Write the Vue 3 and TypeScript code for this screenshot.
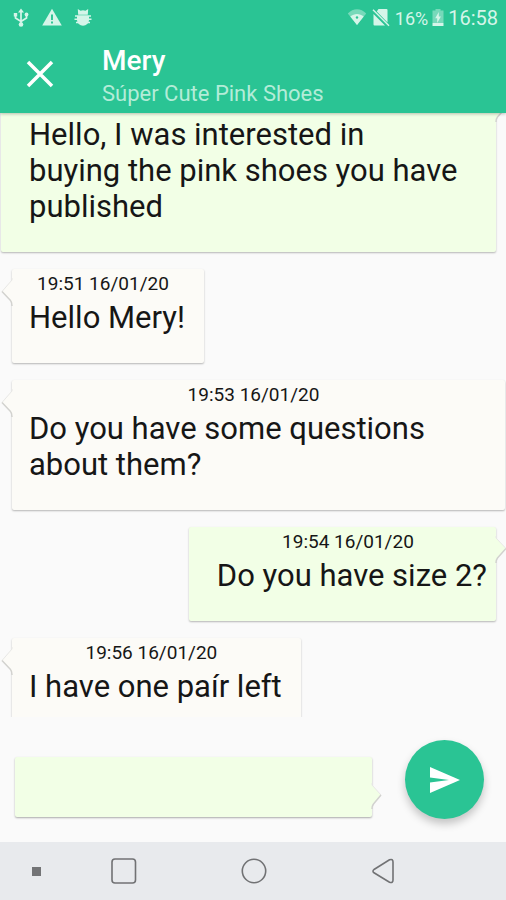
<script setup lang="ts">
import { onMounted, ref } from 'vue'

interface Message {
  id: number
  time: string
  text: string
  mine: boolean
}

const contact = 'Mery'
const item = 'Súper Cute Pink Shoes'
const draft = ref('')
const list = ref<HTMLElement | null>(null)

const messages = ref<Message[]>([
  { id: 1, time: '', text: 'Hello, I was interested in\nbuying the pink shoes you have published', mine: true },
  { id: 2, time: '19:51 16/01/20', text: 'Hello Mery!', mine: false },
  { id: 3, time: '19:53 16/01/20', text: 'Do you have some questions about them?', mine: false },
  { id: 4, time: '19:54 16/01/20', text: 'Do you have size 2?', mine: true },
  { id: 5, time: '19:56 16/01/20', text: 'I have one paír left', mine: false },
])

function send() {
  const text = draft.value.trim()
  if (!text) return
  messages.value.push({ id: messages.value.length + 1, time: '', text, mine: true })
  draft.value = ''
}

onMounted(() => {
  if (list.value) list.value.scrollTop = 35
})
</script>

<template>
  <div class="screen">
    <header class="top">
      <div class="status">
        <div class="status-group left">
          <svg class="icon" viewBox="0 0 20 20" aria-hidden="true">
            <path d="M10 2v14M4.500 6v4l5.500 3.500 5.500-3.500V6" fill="none" stroke="currentColor" stroke-width="1.700" />
            <path d="M10 0.500l3 4H7zM2.800 5h3.400v3.400H2.800z" fill="currentColor" />
            <circle cx="15.500" cy="6.500" r="1.900" fill="currentColor" />
            <circle cx="10" cy="16.500" r="2.300" fill="currentColor" />
          </svg>
          <svg class="icon" viewBox="0 0 20 20" aria-hidden="true">
            <path d="M10 0.800L19.800 17.500H0.200z" fill="currentColor" />
            <path d="M10 6.500v5.500M10 13.500v2" stroke="#2ac494" stroke-width="1.900" />
          </svg>
          <svg class="icon" viewBox="0 0 20 20" aria-hidden="true">
            <path d="M4.800 1l2.700 1.800a6 6 0 0 1 5 0L15.200 1l-.4 5.700H5.200z" fill="currentColor" />
            <path d="M4 8h12v4a6 5.800 0 0 1-12 0z" fill="currentColor" />
            <path d="M2 8h16M1.500 11.200h17M3 14.500h14" stroke="currentColor" stroke-width="1.500" />
          </svg>
        </div>
        <div class="status-group right">
          <svg class="icon" viewBox="0 0 20 20" aria-hidden="true">
            <path d="M0.800 5.500C6-.2 14-.2 19.200 5.500L10 17z" fill="currentColor" opacity=".45" />
            <path d="M3.300 8.600c3.900-3.400 9.500-3.400 13.400 0L10 17z" fill="currentColor" />
            <circle cx="10" cy="9.500" r="1.200" fill="#2ac494" />
          </svg>
          <svg class="icon" viewBox="0 0 20 20" aria-hidden="true">
            <path d="M7.500 1H15.500a1 1 0 0 1 1 1v12.500L5.800 3.500zM2.500 6L14 17.500H3.500a1 1 0 0 1-1-1z" fill="currentColor" />
            <path d="M2 1.800l16 16" stroke="currentColor" stroke-width="1.500" />
          </svg>
          <span class="percent">16%</span>
          <svg class="icon battery" viewBox="0 0 12 20" aria-hidden="true">
            <path d="M3.500 1h5v1.500H11.500V15H.5V2.500h3z" fill="currentColor" opacity=".45" />
            <path d="M.5 15h11v3H.5z" fill="currentColor" />
            <path d="M6.800 4L3.200 10.200h2V15l3.700-6.500h-2.100z" fill="currentColor" />
          </svg>
          <span class="clock">16:58</span>
        </div>
      </div>
      <div class="bar">
        <button class="close" type="button" aria-label="Close">
          <svg viewBox="0 0 28 28" aria-hidden="true">
            <path d="M2 2l24 24M26 2L2 26" stroke="currentColor" stroke-width="3.500" />
          </svg>
        </button>
        <div class="titles">
          <h1>{{ contact }}</h1>
          <p>{{ item }}</p>
        </div>
      </div>
    </header>

    <main ref="list" class="messages">
      <div v-for="m in messages" :key="m.id" class="row" :class="m.mine ? 'sent' : 'received'">
        <article class="bubble">
          <svg v-if="m.mine" class="tail" viewBox="0 0 12 28" aria-hidden="true">
            <path class="tail-fill" d="M0 0H1V2L11 12.500 1 24V27H0z" />
            <path class="tail-top" d="M1 0V2L11 12.500" />
            <path class="tail-edge" d="M11 12.500L2.500 22Q1 24 1 27" />
          </svg>
          <svg v-else class="tail" viewBox="0 0 12 28" aria-hidden="true">
            <path class="tail-fill" d="M12 0H11V2L1 13.500 11 25V28H12z" />
            <path class="tail-top" d="M11 0V2L1 13.500" />
            <path class="tail-edge" d="M1 13.500L9.500 22.500Q11 24 11 28" />
          </svg>
          <time>{{ m.time }}</time>
          <p>{{ m.text }}</p>
        </article>
      </div>
    </main>

    <form class="composer" @submit.prevent="send">
      <div class="field">
        <input v-model="draft" type="text" aria-label="Message" autocomplete="off" />
        <svg class="tail" viewBox="0 0 12 28" aria-hidden="true">
          <path class="tail-fill" d="M0 0H1V2L10 12 1 22V25H0z" />
          <path class="tail-top" d="M1 0V2L10 12" />
          <path class="tail-edge" d="M10 12L2.500 21Q1 23 1 26" />
        </svg>
      </div>
      <button class="send" type="submit" aria-label="Send">
        <svg viewBox="0 0 30 26" aria-hidden="true">
          <path d="M0 0L30 13 0 26V15.500L19 13 0 10.500z" fill="currentColor" />
        </svg>
      </button>
    </form>

    <nav class="nav" aria-label="System">
      <button class="dot" type="button" aria-label="Hide bar"><span></span></button>
      <button type="button" aria-label="Recent apps">
        <svg viewBox="0 0 26 26" aria-hidden="true"><rect x="1" y="1" width="23.500" height="24" rx="3" /></svg>
      </button>
      <button type="button" aria-label="Home">
        <svg viewBox="0 0 26 26" aria-hidden="true"><circle cx="13" cy="13" r="11.700" /></svg>
      </button>
      <button type="button" aria-label="Back">
        <svg viewBox="0 0 26 26" aria-hidden="true">
          <path d="M3 11.500L18.500 1.800Q22 0.500 22 4V22Q22 25.500 18.500 24.200L3 14.800Q1 13.200 3 11.500z" />
        </svg>
      </button>
    </nav>
  </div>
</template>

<style>
body {
  margin: 0;
}
</style>

<style scoped>
.screen {
  display: flex;
  flex-direction: column;
  height: 100vh;
  background: #fafafa;
  color: #161616;
  font-family: Roboto, "Liberation Sans", sans-serif;
}

button {
  display: flex;
  align-items: center;
  justify-content: center;
  padding: 0;
  border: 0;
  background: none;
  cursor: pointer;
}

h1,
p {
  margin: 0;
}

.top {
  position: relative;
  z-index: 1;
  flex: none;
  background: #2ac494;
  color: #fff;
  box-shadow: 0 1px 3px rgba(0, 0, 0, 0.25);
}

.status {
  display: flex;
  justify-content: space-between;
  height: 36px;
  padding: 0 8px 0 11px;
  color: #d5f5e9;
  font-size: 20px;
}

.status-group {
  display: flex;
  align-items: center;
}

.left {
  gap: 11px;
}

.right {
  gap: 4px;
}

.icon {
  width: 20px;
  height: 20px;
}

.battery {
  width: 12px;
}

.percent {
  font-size: 18px;
}

.bar {
  display: flex;
  align-items: center;
  height: 77px;
}

.close {
  width: 80px;
  height: 76px;
  padding-bottom: 2px;
  color: #fff;
}

.close svg {
  width: 28px;
  height: 28px;
}

.titles {
  padding: 4px 0 0 22px;
}

.titles h1 {
  font-size: 28px;
  font-weight: 500;
  line-height: 34px;
}

.titles p {
  color: #b3ecd8;
  font-size: 22px;
  line-height: 32px;
}

.messages {
  display: flex;
  flex: 1;
  flex-direction: column;
  gap: 17px;
  min-height: 0;
  padding: 8px 0 32px;
  overflow: hidden auto;
  scrollbar-width: none;
}

.row {
  display: flex;
  flex: none;
}

.received {
  padding: 0 1px 0 12px;
}

.sent {
  justify-content: flex-end;
  padding: 0 10px 0 1px;
}

.bubble {
  position: relative;
  padding: 1px 19px 27px 17px;
  border-radius: 2px;
  background: #fcfbf7;
  box-shadow: 0 1px 2px rgba(0, 0, 0, 0.28);
}

.sent .bubble {
  padding: 1px 9px 27px 28px;
  background: #f2ffe6;
}

.bubble time {
  display: block;
  min-height: 28px;
  margin-bottom: 2px;
  padding-right: 8px;
  font-size: 19px;
  line-height: 28px;
  text-align: center;
}

.bubble p {
  font-size: 31px;
  line-height: 36px;
  white-space: pre-line;
}

.tail {
  position: absolute;
  width: 12px;
  height: 28px;
  fill: none;
}

.received .tail {
  top: 9px;
  right: 100%;
  margin-right: -1px;
}

.sent .tail,
.field .tail {
  top: 9px;
  left: 100%;
  margin-left: -1px;
}

.tail-fill {
  fill: #fcfbf7;
}

.sent .tail-fill,
.field .tail-fill {
  fill: #f2ffe6;
}

.tail-top {
  stroke: #e8e8e6;
}

.tail-edge {
  stroke: #d2d2cf;
  stroke-width: 1.5;
}

.composer {
  display: flex;
  flex: none;
  align-items: center;
  gap: 33px;
  height: 125px;
  padding: 0 22px 0 15px;
}

.field {
  position: relative;
  flex: 1;
  margin-top: 15px;
}

.field input {
  display: block;
  box-sizing: border-box;
  width: 100%;
  height: 60px;
  padding: 0 16px;
  border: 0;
  border-radius: 2px;
  outline: 0;
  background: #f2ffe6;
  box-shadow: 0 1px 2px rgba(0, 0, 0, 0.32);
  color: inherit;
  font: inherit;
  font-size: 31px;
}

.field .tail {
  top: 26px;
}

.send {
  flex: none;
  width: 79px;
  height: 79px;
  border-radius: 50%;
  background: #2ac494;
  box-shadow: 0 5px 9px rgba(0, 0, 0, 0.22);
  color: #fff;
}

.send svg {
  width: 30px;
  height: 26px;
}

.nav {
  display: grid;
  flex: none;
  grid-template-columns: 59fr 130fr 130fr 130fr 57fr;
  height: 58px;
  background: #e8eaed;
}

.nav svg {
  width: 26px;
  height: 26px;
  fill: none;
  stroke: #717274;
  stroke-width: 1.6;
}

.dot {
  justify-content: flex-end;
  padding-right: 18px;
}

.dot span {
  width: 9px;
  height: 9px;
  background: #737476;
}
</style>
